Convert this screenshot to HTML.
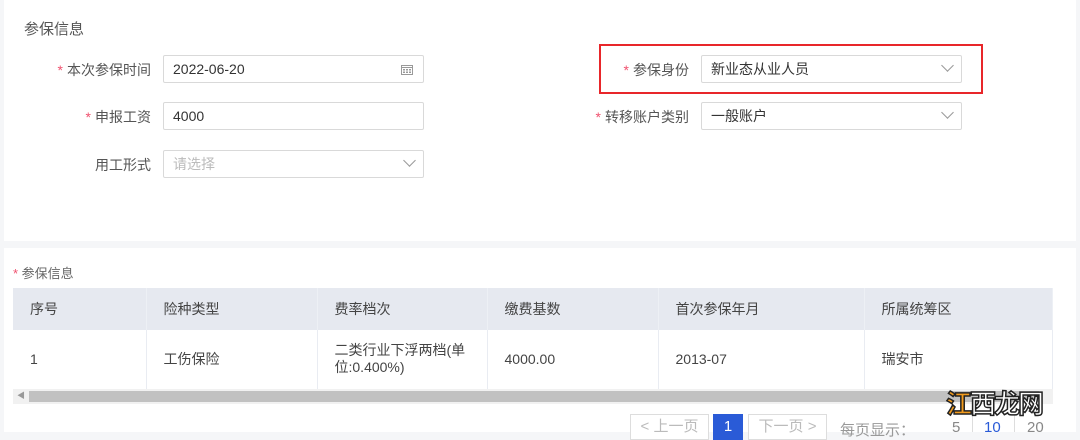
<!DOCTYPE html>
<html><head><meta charset="utf-8"><style>
*{margin:0;padding:0;box-sizing:border-box}
body{width:1080px;height:432px;overflow:hidden;background:#f5f6f8;font-family:"Liberation Sans","Noto Sans CJK SC",sans-serif;color:#333;position:relative}
.card{position:absolute;background:#fff}
.abs{position:absolute;white-space:nowrap}
.lbl{position:absolute;font-size:14px;color:#555;text-align:right;white-space:nowrap}
.lbl b{color:#f0506e;font-weight:normal;margin-right:4px}
.inp{position:absolute;width:261px;height:28px;border:1px solid #d9d9d9;border-radius:2px;font-size:14px;line-height:26px;padding-left:9px;color:#333;background:#fff}
.arr{position:absolute;right:9px;width:9px;height:9px;border-right:1.2px solid #999;border-bottom:1.2px solid #999;transform:rotate(45deg);top:5px}
table{border-collapse:collapse;position:absolute;left:13px;top:288px;width:1040px;font-size:14px;color:#444}
th{background:#e6e9f0;height:42px;text-align:left;font-weight:normal;padding-left:17px;border-right:1px solid #edf0f5}
td{height:59px;padding-left:17px;border-right:1px solid #e9ecf2;border-bottom:1px solid #e9ecf2;line-height:17px}
.pg{position:absolute;top:414px;height:26px;border:1px solid #ddd;font-size:15px;color:#bbb;text-align:center;line-height:24px;background:#fff}
</style></head><body>
<div class="card" style="left:4px;top:0;width:1072px;height:241px"></div>
<div class="card" style="left:4px;top:248px;width:1072px;height:184px"></div>
<div class="abs" style="left:24px;top:18px;font-size:15px;color:#555">参保信息</div>

<div class="lbl" style="right:929px;top:60px"><b>*</b>本次参保时间</div>
<div class="inp" style="left:163px;top:55px">2022-06-20
<svg style="position:absolute;right:10px;top:8px" width="12" height="11" viewBox="0 0 12 11"><rect x="0.5" y="1.5" width="11" height="9" fill="none" stroke="#999"/><line x1="0" y1="3.5" x2="12" y2="3.5" stroke="#999"/><g fill="#999"><rect x="2" y="5" width="2" height="1.5"/><rect x="5" y="5" width="2" height="1.5"/><rect x="8" y="5" width="2" height="1.5"/><rect x="2" y="7.5" width="2" height="1.5"/><rect x="5" y="7.5" width="2" height="1.5"/><rect x="8" y="7.5" width="2" height="1.5"/></g></svg></div>
<div class="lbl" style="right:929px;top:107px"><b>*</b>申报工资</div>
<div class="inp" style="left:163px;top:102px">4000</div>
<div class="lbl" style="right:929px;top:155px">用工形式</div>
<div class="inp" style="left:163px;top:150px;color:#bbb">请选择<span class="arr"></span></div>

<div style="position:absolute;left:599px;top:44px;width:384px;height:50px;border:2px solid #e8262a"></div>
<div class="lbl" style="right:391px;top:60px"><b>*</b>参保身份</div>
<div class="inp" style="left:701px;top:55px">新业态从业人员<span class="arr"></span></div>
<div class="lbl" style="right:391px;top:107px"><b>*</b>转移账户类别</div>
<div class="inp" style="left:701px;top:102px">一般账户<span class="arr"></span></div>

<div class="abs" style="left:13px;top:263px;font-size:13px;color:#666"><span style="color:#f0506e">*</span> 参保信息</div>
<table>
<tr><th style="width:133px">序号</th><th style="width:171px">险种类型</th><th style="width:170px">费率档次</th><th style="width:171px">缴费基数</th><th style="width:206px">首次参保年月</th><th>所属统筹区</th></tr>
<tr><td>1</td><td>工伤保险</td><td>二类行业下浮两档(单<br>位:0.400%)</td><td>4000.00</td><td>2013-07</td><td>瑞安市</td></tr>
</table>
<div style="position:absolute;left:13px;top:389px;width:1040px;height:15px;background:#f1f1f1"></div>
<div style="position:absolute;left:29px;top:391px;width:1010px;height:11px;background:#c1c1c1"></div>
<div class="abs" style="left:17px;top:390px;font-size:8px;color:#999">◀</div>

<div class="pg" style="left:630px;width:79px">&lt; 上一页</div>
<div class="pg" style="left:713px;width:30px;background:#2a5bd7;border-color:#2a5bd7;color:#fff">1</div>
<div class="pg" style="left:748px;width:79px">下一页 &gt;</div>
<div class="abs" style="left:840px;top:419px;font-size:15px;color:#999">每页显示：</div>
<div class="abs" style="left:952px;top:419px;font-size:15px;color:#888">5</div>
<div style="position:absolute;left:972px;top:414px;width:1px;height:18px;background:#ddd"></div>
<div class="abs" style="left:984px;top:419px;font-size:15px;color:#2a5bd7">10</div>
<div style="position:absolute;left:1014px;top:414px;width:1px;height:18px;background:#ddd"></div>
<div class="abs" style="left:1027px;top:419px;font-size:15px;color:#888">20</div>
<div class="abs" style="left:946px;top:384px;font-size:26px;font-weight:bold;color:#f29b1d;-webkit-text-stroke:1.5px #222;letter-spacing:-2px">江<span style="color:#fff">西龙网</span></div>
</body></html>
